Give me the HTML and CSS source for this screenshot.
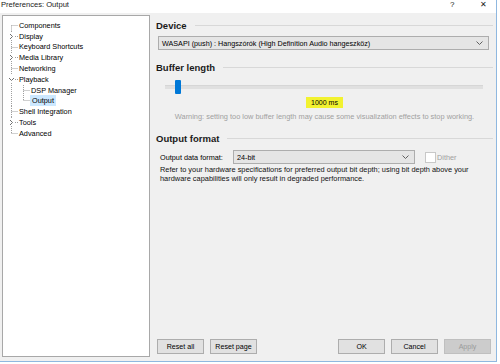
FILE: index.html
```html
<!DOCTYPE html>
<html lang="en">
<head>
    <meta charset="UTF-8">
    <title>Preferences: Output</title>
    <link rel="stylesheet" href="styles.css">
</head>
<body>
    <div class="window">
        <div class="titlebar">
            <span class="title">Preferences: Output</span>
            <span class="help">?</span>
            <span class="close">&#x2715;</span>
        </div>
        <div class="content">
            <div class="tree">
                <div class="row"><svg class="twig" width="16" height="11"><path d="M8.5 5.5V11M8.5 5.5H15"/></svg>Components</div>
                <div class="row"><svg class="twig" width="16" height="11"><path d="M8.5 0V2M8.5 9V11M12 5.5H15"/><path class="exp" d="M7 3l2.5 2.5L7 8"/></svg>Display</div>
                <div class="row"><svg class="twig" width="16" height="11"><path d="M8.5 0V11M8.5 5.5H15"/></svg>Keyboard Shortcuts</div>
                <div class="row"><svg class="twig" width="16" height="11"><path d="M8.5 0V2M8.5 9V11M12 5.5H15"/><path class="exp" d="M7 3l2.5 2.5L7 8"/></svg>Media Library</div>
                <div class="row"><svg class="twig" width="16" height="11"><path d="M8.5 0V11M8.5 5.5H15"/></svg>Networking</div>
                <div class="row"><svg class="twig" width="16" height="11"><path d="M8.5 9V11M12 5.5H15"/><path class="exp" d="M6 4l2.5 2.5L11 4"/></svg>Playback</div>
                <div class="row"><svg class="twig" width="28" height="11"><path d="M8.5 0V11M20.5 0V11M20.5 5.5H27"/></svg>DSP Manager</div>
                <div class="row"><svg class="twig" width="28" height="11"><path d="M8.5 0V11M20.5 0V5.5M20.5 5.5H27"/></svg><span class="sel">Output</span></div>
                <div class="row"><svg class="twig" width="16" height="11"><path d="M8.5 0V11M8.5 5.5H15"/></svg>Shell Integration</div>
                <div class="row"><svg class="twig" width="16" height="11"><path d="M8.5 0V2M8.5 9V11M12 5.5H15"/><path class="exp" d="M7 3l2.5 2.5L7 8"/></svg>Tools</div>
                <div class="row"><svg class="twig" width="16" height="11"><path d="M8.5 0V5.5M8.5 5.5H15"/></svg>Advanced</div>
            </div>
            <div class="main">
                <div class="group-title first">Device</div>
                <div class="combo wide">
                    <span>WASAPI (push) : Hangszórók (High Definition Audio hangeszköz)</span>
                    <svg class="chev" width="7" height="4"><path d="M0.5 0.5L3.5 3.5L6.5 0.5"/></svg>
                </div>

                <div class="group-title">Buffer length</div>
                <div class="slider">
                    <div class="track"></div>
                    <div class="thumb"></div>
                </div>
                <div class="value"><span class="mark">1000 ms</span></div>
                <div class="warning">Warning: setting too low buffer length may cause some visualization effects to stop working.</div>

                <div class="group-title">Output format</div>
                <div class="format-row">
                    <span class="label">Output data format:</span>
                    <div class="combo narrow">
                        <span>24-bit</span>
                        <svg class="chev" width="7" height="4"><path d="M0.5 0.5L3.5 3.5L6.5 0.5"/></svg>
                    </div>
                    <span class="check"></span>
                    <span class="dither">Dither</span>
                </div>
                <p class="note">Refer to your hardware specifications for preferred output bit depth; using bit depth above your hardware capabilities will only result in degraded performance.</p>

                <div class="buttons">
                    <button class="btn">Reset all</button>
                    <button class="btn">Reset page</button>
                    <span class="fill"></span>
                    <button class="btn">OK</button>
                    <button class="btn">Cancel</button>
                    <button class="btn" disabled>Apply</button>
                </div>
            </div>
        </div>
    </div>
</body>
</html>
```

FILE: styles.css
```css
body { margin: 0; background: #fff; font-family: 'Liberation Sans', Arial, sans-serif; font-size: 7.3px; color: #000; }
.window {
    width: 496px;
    height: 361px;
    border-right: 1px solid #8fb8e0;
    border-bottom: 1px solid #8fb8e0;
    background: #f0f0f0;
    display: flex;
    flex-direction: column;
}
.titlebar {
    height: 13px;
    background: #fff;
    display: flex;
    align-items: center;
    font-size: 7.6px;
    color: #222;
}
.title { flex: 1; padding-left: 1px; margin-top: -5px; }
.help { width: 30px; margin-top: -4px; font-size: 8px; }
.close { width: 16px; margin-top: -4px; font-size: 8px; }
.content { flex: 1; display: flex; padding: 2px 0 4px 2px; }
.tree {
    width: 146px;
    background: #fff;
    border: 1px solid #a8a8a8;
    padding-top: 4px;
}
.row { height: 10.8px; display: flex; align-items: center; white-space: nowrap; }
.twig { flex: none; }
.twig path { fill: none; stroke: #a0a0a0; stroke-width: 1; stroke-dasharray: 1 1; }
.twig path.exp { stroke: #707070; stroke-dasharray: none; }
.sel { background: #cce8ff; padding: 1px 2px 1px 2px; margin-left: -1px; }
.main { flex: 1; display: flex; flex-direction: column; padding: 0 3px 0 6px; }
.group-title {
    font-size: 9.5px;
    font-weight: bold;
    color: #1a1a1a;
    display: flex;
    align-items: center;
    gap: 8px;
    height: 12px;
    margin-top: 11px;
}
.group-title.first { margin-top: 4px; }
.group-title::after { content: ''; flex: 1; border-top: 1px solid #d8d8d8; }
.combo {
    height: 12px;
    border: 1px solid #adadad;
    background: #e5e5e5;
    display: flex;
    align-items: center;
    justify-content: space-between;
    padding: 0 5px 0 3px;
    font-size: 7.2px;
}
.combo.wide { margin: 5px 4px 0 2px; }
.chev path { fill: none; stroke: #606060; stroke-width: 1; }
.slider { height: 14px; margin: 7px 10px 0 9px; display: flex; align-items: center; position: relative; }
.track { flex: 1; height: 3px; background: #e0e0e0; border-top: 1px solid #d6d6d6; }
.thumb { position: absolute; left: 10px; top: 0; width: 6px; height: 14px; background: #0078d7; border-radius: 1px; }
.value { text-align: center; margin-top: 3px; height: 12px; }
.mark { background: #f2f230; display: inline-block; padding: 2px 5px 2px 5px; font-size: 7px; }
.warning { text-align: center; color: #a0a0a0; font-size: 7.4px; margin-top: 3px; }
.format-row { display: flex; align-items: center; margin: 6px 0 0 4px; }
.label { width: 73px; }
.combo.narrow { width: 172px; }
.check { width: 9px; height: 9px; border: 1px solid #c8c8c8; background: #fff; margin-left: 10px; }
.dither { color: #a0a0a0; margin-left: 1px; }
.note { margin: 1px 0 0 4px; max-width: 318px; font-size: 7.4px; line-height: 9px; color: #111; }
.buttons { margin-top: auto; display: flex; gap: 6px; padding: 0 2px 3px 1px; }
.fill { flex: 1; }
.btn {
    width: 47px;
    height: 15px;
    padding: 0;
    border: 1px solid #adadad;
    background: #e1e1e1;
    font-family: 'Liberation Sans', Arial, sans-serif;
    font-size: 7.1px;
    color: #000;
}
.btn[disabled] { background: #cccccc; border-color: #bfbfbf; color: #9a9a9a; }
```
